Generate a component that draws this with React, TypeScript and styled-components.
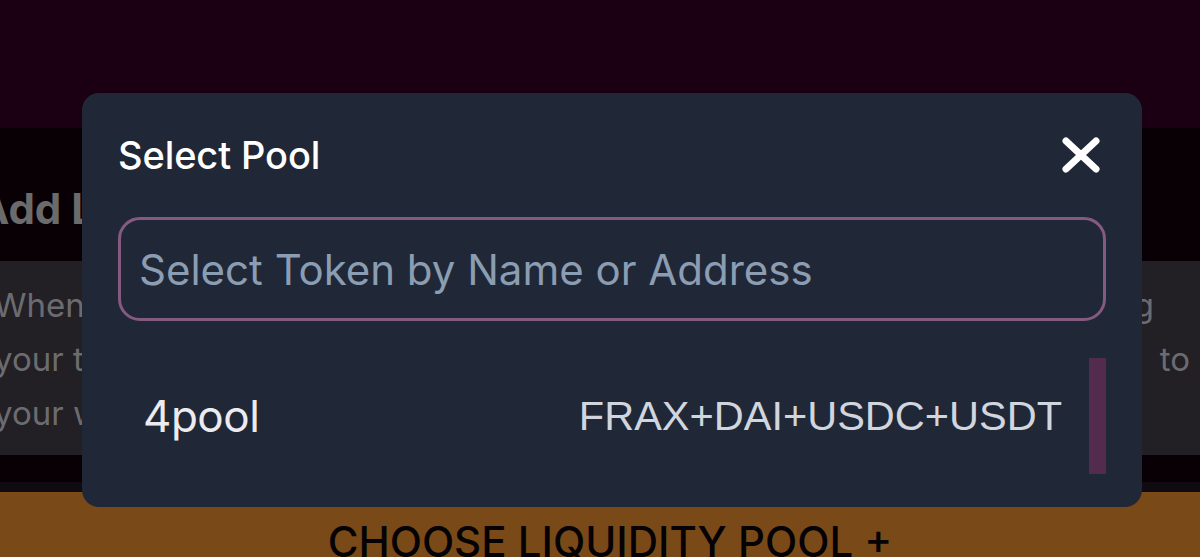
import React from "react";
import styled, { createGlobalStyle } from "styled-components";

const Global = createGlobalStyle`
  html, body { margin: 0; padding: 0; }
  body {
    width: 1200px;
    height: 557px;
    overflow: hidden;
    background: #090006;
    font-family: Inter, "Noto Sans", sans-serif;
  }
  * { box-sizing: border-box; }
`;

const Page = styled.div`
  position: relative;
  width: 1200px;
  height: 557px;
  overflow: hidden;
  display: flex;
  flex-direction: column;
`;

const TopBar = styled.header`
  height: 128px;
  flex: none;
  background: #1a0012;
`;

const Main = styled.main`
  flex: 1;
  display: flex;
  flex-direction: column;
  background: #090006;
`;

const Heading = styled.h2`
  margin: 60px 0 0 -22px;
  font-size: 42px;
  line-height: 42px;
  font-weight: 700;
  color: #6b6b6b;
  white-space: nowrap;
`;

const InfoPanel = styled.div`
  margin: 31px 0 0 -6px;
  padding: 17px 0 15px 0;
  background: #221f25;
  display: flex;
  flex-direction: column;
`;

const InfoLine = styled.div<{ $endGap: number }>`
  display: flex;
  justify-content: space-between;
  font-size: 33px;
  line-height: 54px;
  color: #6c6c70;
  white-space: nowrap;
  padding-right: ${(p) => p.$endGap}px;
`;

const Strip = styled.div`
  margin-top: 27px;
  height: 10px;
  background: #0f0b10;
`;

const ChooseButton = styled.button`
  height: 80px;
  border: none;
  margin: 0;
  padding: 29px 0 0 20px;
  background: #7a4918;
  color: #050205;
  font-family: Inter, sans-serif;
  font-size: 42px;
  line-height: 42px;
  font-weight: 500;
  text-align: center;
  align-self: stretch;
  display: flex;
  justify-content: center;
  align-items: flex-start;
`;

const Modal = styled.div`
  position: absolute;
  top: 93px;
  left: 82px;
  width: 1060px;
  height: 414px;
  background: #202837;
  border-radius: 17px;
  padding: 34px 36px 33px 36px;
  display: flex;
  flex-direction: column;
`;

const ModalHeader = styled.div`
  height: 56px;
  display: flex;
  align-items: center;
  justify-content: space-between;
`;

const Title = styled.h3`
  margin: 0;
  font-size: 38px;
  line-height: 38px;
  font-weight: 500;
  color: #ffffff;
  letter-spacing: -0.1px;
`;

const CloseButton = styled.button`
  background: none;
  border: none;
  padding: 0;
  margin-right: 6px;
  width: 38px;
  height: 36px;
  display: flex;
  cursor: pointer;
`;

const SearchInput = styled.input`
  margin-top: 34px;
  height: 104px;
  width: 100%;
  border: 3px solid #855a80;
  border-radius: 22px;
  background: transparent;
  padding: 0 18px;
  font-family: Inter, sans-serif;
  font-size: 42px;
  color: #ffffff;
  outline: none;
  &::placeholder {
    color: #8b9db3;
  }
`;

const List = styled.div`
  margin-top: 37px;
  height: 116px;
  display: flex;
`;

const Rows = styled.div`
  flex: 1;
  display: flex;
  flex-direction: column;
`;

const PoolRow = styled.div`
  height: 116px;
  display: flex;
  align-items: center;
  justify-content: space-between;
  padding: 0 27px 0 25px;
`;

const PoolName = styled.span`
  font-family: Inter, sans-serif;
  font-size: 44px;
  font-weight: 400;
  color: #ececf0;
  letter-spacing: -0.5px;
`;

const PoolTokens = styled.span`
  font-family: "Liberation Sans", Arial, sans-serif;
  font-size: 41.5px;
  color: #d1d5de;
`;

const ScrollThumb = styled.div`
  width: 17px;
  height: 116px;
  background: #522b4e;
`;

export default function App() {
  return (
    <>
      <Global />
      <Page>
        <TopBar />
        <Main>
          <Heading>Add Liquidity</Heading>
          <InfoPanel>
            <InfoLine $endGap={46}>
              <span>When you add liquidity to a pool you will be providing</span>
              <span>g</span>
            </InfoLine>
            <InfoLine $endGap={10}>
              <span>your tokens to the pool and will receive LP tokens</span>
              <span>to</span>
            </InfoLine>
            <InfoLine $endGap={0}>
              <span>your wallet representing your share of the pool.</span>
              <span></span>
            </InfoLine>
          </InfoPanel>
          <Strip />
          <ChooseButton>CHOOSE LIQUIDITY POOL +</ChooseButton>
        </Main>
        <Modal>
          <ModalHeader>
            <Title>Select Pool</Title>
            <CloseButton aria-label="Close">
              <svg width="38" height="36" viewBox="0 0 38 36">
                <path
                  d="M4 4 L34 32 M34 4 L4 32"
                  stroke="#ffffff"
                  strokeWidth="7"
                  strokeLinecap="round"
                />
              </svg>
            </CloseButton>
          </ModalHeader>
          <SearchInput placeholder="Select Token by Name or Address" />
          <List>
            <Rows>
              <PoolRow>
                <PoolName>4pool</PoolName>
                <PoolTokens>FRAX+DAI+USDC+USDT</PoolTokens>
              </PoolRow>
            </Rows>
            <ScrollThumb />
          </List>
        </Modal>
      </Page>
    </>
  );
}
